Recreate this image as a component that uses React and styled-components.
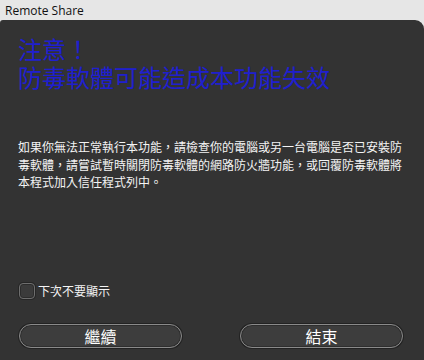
import React, { useState } from "react";
import styled, { createGlobalStyle } from "styled-components";

const GlobalStyle = createGlobalStyle`
  html, body {
    margin: 0;
    padding: 0;
    background: #e6e6e6;
  }
  body {
    font-family: "Noto Sans CJK TC", "Noto Sans", sans-serif;
  }
`;

const Window = styled.div`
  width: 424px;
  height: 360px;
  display: flex;
  flex-direction: column;
  background: #e6e6e6;
  overflow: hidden;
`;

const TitleBar = styled.div`
  height: 20px;
  flex: none;
  display: flex;
  align-items: center;
  padding-left: 5px;
  font-family: "Open Sans", "Noto Sans", sans-serif;
  font-size: 12px;
  color: #111;
`;

const Panel = styled.div`
  flex: 1;
  display: flex;
  flex-direction: column;
  background: #333333;
  border-radius: 3px 9px 0 0;
  padding: 0 21px 0 18px;
`;

const Heading = styled.h1`
  margin: 15px 0 0;
  font-size: 24px;
  line-height: 28px;
  font-weight: 400;
  color: #1f1fcf;
`;

const HeadLine = styled.span`
  display: block;
`;

const Body = styled.p`
  margin: 47px 0 0;
  font-size: 12px;
  line-height: 17.5px;
  color: #f4f4f4;
`;

const CheckRow = styled.label`
  margin-top: auto;
  display: flex;
  align-items: center;
  gap: 3px;
  font-size: 12px;
  color: #f4f4f4;
  cursor: pointer;
`;

const Box = styled.span`
  width: 14px;
  height: 14px;
  margin-left: 1px;
  border-radius: 4px;
  border: 1px solid #6e6e6e;
  background: #3b3b3b;
  box-shadow: 0 0 0 1px #262626, inset 0 0 0 1px #2c2c2c;
  display: flex;
  align-items: center;
  justify-content: center;
  color: #eee;
  font-size: 11px;
`;

const Buttons = styled.div`
  display: flex;
  justify-content: space-between;
  margin: 25px 0 12px 1px;
`;

const Button = styled.button`
  width: 163px;
  height: 24px;
  border-radius: 12px;
  border: 1px solid #8a8a8a;
  background: #3d3d3d;
  box-shadow: 0 0 0 1px #222, inset 0 0 0 1px #2e2e2e;
  color: #ffffff;
  font-family: "Noto Sans CJK TC", sans-serif;
  font-size: 16px;
  line-height: 20px;
  padding: 0;
  cursor: pointer;
`;

export default function App() {
  const [checked, setChecked] = useState(false);
  return (
    <Window>
      <GlobalStyle />
      <TitleBar>Remote Share</TitleBar>
      <Panel>
        <Heading>
          <HeadLine>注意！</HeadLine>
          <HeadLine>防毒軟體可能造成本功能失效</HeadLine>
        </Heading>
        <Body>
          如果你無法正常執行本功能，請檢查你的電腦或另一台電腦是否已安裝防毒軟體，請嘗試暫時關閉防毒軟體的網路防火牆功能，或回覆防毒軟體將本程式加入信任程式列中。
        </Body>
        <CheckRow onClick={() => setChecked(!checked)}>
          <Box>{checked ? "✓" : ""}</Box>
          下次不要顯示
        </CheckRow>
        <Buttons>
          <Button>繼續</Button>
          <Button>結束</Button>
        </Buttons>
      </Panel>
    </Window>
  );
}
